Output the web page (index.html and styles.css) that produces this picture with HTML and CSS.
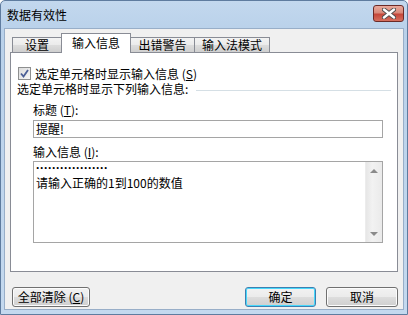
FILE: index.html
```html
<!DOCTYPE html>
<html lang="zh-CN">
<head>
    <meta charset="UTF-8">
    <meta name="viewport" content="width=device-width, initial-scale=1.0">
    <title>数据有效性</title>
    <link rel="stylesheet" href="styles.css">
</head>
<body>

    <div class="window">
        <div class="titlebar">
            <span class="title">数据有效性</span>
            <button class="close-btn" aria-label="关闭">
                <svg width="14" height="11" viewBox="0 0 14 11">
                    <path d="M2 1.5 L12 9.5 M12 1.5 L2 9.5" stroke="#4b4b4b" stroke-width="4.2" stroke-linecap="round"/>
                    <path d="M2 1.5 L12 9.5 M12 1.5 L2 9.5" stroke="#ffffff" stroke-width="2.4" stroke-linecap="round"/>
                </svg>
            </button>
        </div>

        <div class="client">
            <div class="tabs">
                <div class="tab tab-w1">设置</div>
                <div class="tab tab-w2 active">输入信息</div>
                <div class="tab tab-w3">出错警告</div>
                <div class="tab tab-w4">输入法模式</div>
            </div>

            <div class="panel">
                <label class="check-row">
                    <span class="checkbox">
                        <svg width="9" height="9" viewBox="0 0 9 9">
                            <path d="M1 4.5 L3.5 7.5 L8 1" fill="none" stroke="#4a5e96" stroke-width="1.8"/>
                        </svg>
                    </span>
                    <span>选定单元格时显示输入信息 (<u>S</u>)</span>
                </label>

                <div class="group-label">
                    <span>选定单元格时显示下列输入信息:</span>
                    <span class="group-line"></span>
                </div>

                <div class="field-label">标题 (<u>T</u>):</div>
                <div class="textbox">提醒!</div>

                <div class="field-label msg-label">输入信息 (<u>I</u>):</div>
                <div class="textarea">
                    <div class="textarea-text">
                        <div class="dots">··················</div>
                        <div>请输入正确的1到100的数值</div>
                    </div>
                    <div class="scrollbar">
                        <span class="arrow-up"></span>
                        <span class="arrow-down"></span>
                    </div>
                </div>
            </div>

            <div class="footer">
                <button class="btn btn-clear">全部清除 (<u>C</u>)</button>
                <div class="footer-right">
                    <button class="btn btn-ok">确定</button>
                    <button class="btn btn-cancel">取消</button>
                </div>
            </div>
        </div>
    </div>

</body>
</html>
```

FILE: styles.css
```css
* {
    box-sizing: border-box;
}

body {
    margin: 0;
    background: #ffffff;
    font-family: "Noto Sans CJK SC", "Liberation Sans", sans-serif;
    font-size: 12px;
    color: #000;
}

.window {
    width: 408px;
    height: 315px;
    border: 1px solid #5f7c9f;
    border-radius: 5px 5px 0 0;
    padding: 0 3px 4px 3px;
    background: linear-gradient(to bottom, #c3d8ee 0px, #b9d1ea 30px, #c4d9ef 100%);
    display: flex;
    flex-direction: column;
}

.titlebar {
    height: 27px;
    display: flex;
    justify-content: space-between;
    align-items: flex-start;
    padding: 0 0 0 3px;
}

.title {
    line-height: 14px;
    margin-top: 7px;
    font-size: 12px;
}

.close-btn {
    width: 31px;
    height: 17px;
    margin-top: 4px;
    padding: 0;
    border: 1px solid #6b2a27;
    border-radius: 3px;
    background: linear-gradient(to bottom, #e9a99c 0%, #d98a7b 45%, #c5473a 55%, #d6705f 100%);
    display: flex;
    align-items: center;
    justify-content: center;
}

.client {
    flex: 1;
    background: #f0f0f0;
    border: 1px solid #98aec8;
    padding: 4px 5px 0 5px;
    display: flex;
    flex-direction: column;
}

.tabs {
    height: 19px;
    display: flex;
    align-items: flex-end;
    padding-left: 2px;
    position: relative;
    z-index: 1;
}

.tab {
    height: 15px;
    line-height: 14px;
    text-align: center;
    border: 1px solid #898c95;
    border-bottom: none;
    margin-right: -1px;
    background: linear-gradient(to bottom, #f3f3f3 0%, #ebebeb 50%, #dddddd 51%, #cfcfcf 100%);
}

.tab.active {
    height: 20px;
    margin-bottom: -1px;
    line-height: 18px;
    background: #ffffff;
    position: relative;
    z-index: 2;
}

.tab-w1 { width: 50px; }
.tab-w2 { width: 70px; }
.tab-w3 { width: 65px; }
.tab-w4 { width: 76px; }

.panel {
    height: 220px;
    background: #ffffff;
    border: 1px solid #898c95;
    padding: 13px 6px 0 6px;
}

.check-row {
    display: flex;
    align-items: center;
    height: 15px;
    line-height: 14px;
}

.checkbox {
    width: 13px;
    height: 13px;
    margin: 0 4px 0 1px;
    border: 1px solid #8e8f8f;
    background: linear-gradient(135deg, #dcdcdc 0%, #f6f6f6 100%);
    display: flex;
    align-items: center;
    justify-content: center;
}

.group-label {
    display: flex;
    align-items: center;
    height: 14px;
    line-height: 14px;
    margin-top: 1px;
}

.group-line {
    flex: 1;
    height: 1px;
    margin: 3px 0 0 8px;
    background: #d5dfe5;
}

.field-label {
    margin: 7px 0 0 16px;
    line-height: 14px;
}

.textbox {
    margin: 3px 8px 0 16px;
    height: 18px;
    border: 1px solid #a5a5a5;
    padding-left: 2px;
    line-height: 16px;
}

.msg-label {
    margin-top: 7px;
}

.textarea {
    margin: 2px 8px 0 16px;
    height: 82px;
    border: 1px solid #a5a5a5;
    display: flex;
}

.textarea-text {
    flex: 1;
    padding: 0 0 0 2px;
    line-height: 14px;
}

.dots {
    font-family: "Liberation Sans", sans-serif;
    font-weight: bold;
    line-height: 12px;
    height: 14px;
}

.scrollbar {
    width: 17px;
    background: linear-gradient(to right, #e6e6e6, #f2f2f2 40%, #eaeaea);
    border-left: 1px solid #ececec;
    display: flex;
    flex-direction: column;
    justify-content: space-between;
    align-items: center;
    padding: 7px 0 6px 0;
}

.arrow-up,
.arrow-down {
    width: 0;
    height: 0;
    border-left: 4px solid transparent;
    border-right: 4px solid transparent;
}

.arrow-up {
    border-bottom: 4px solid #8a8a8a;
}

.arrow-down {
    border-top: 4px solid #8a8a8a;
}

.footer {
    display: flex;
    justify-content: space-between;
    margin-top: 15px;
    padding-left: 2px;
}

.footer-right {
    display: flex;
    gap: 10px;
}

.btn {
    height: 20px;
    padding: 0;
    font-family: "Noto Sans CJK SC", "Liberation Sans", sans-serif;
    font-size: 12px;
    line-height: 16px;
    color: #000;
    border: 1px solid #707070;
    border-radius: 3px;
    background: linear-gradient(to bottom, #f2f2f2 0%, #ebebeb 50%, #dddddd 51%, #cfcfcf 100%);
    box-shadow: inset 0 0 0 1px #fcfcfc;
}

.btn-clear {
    width: 78px;
}

.btn-ok {
    width: 71px;
    border-color: #3c7fb1;
    box-shadow: inset 0 0 0 1px #48d8fb;
}

.btn-cancel {
    width: 72px;
}
```
